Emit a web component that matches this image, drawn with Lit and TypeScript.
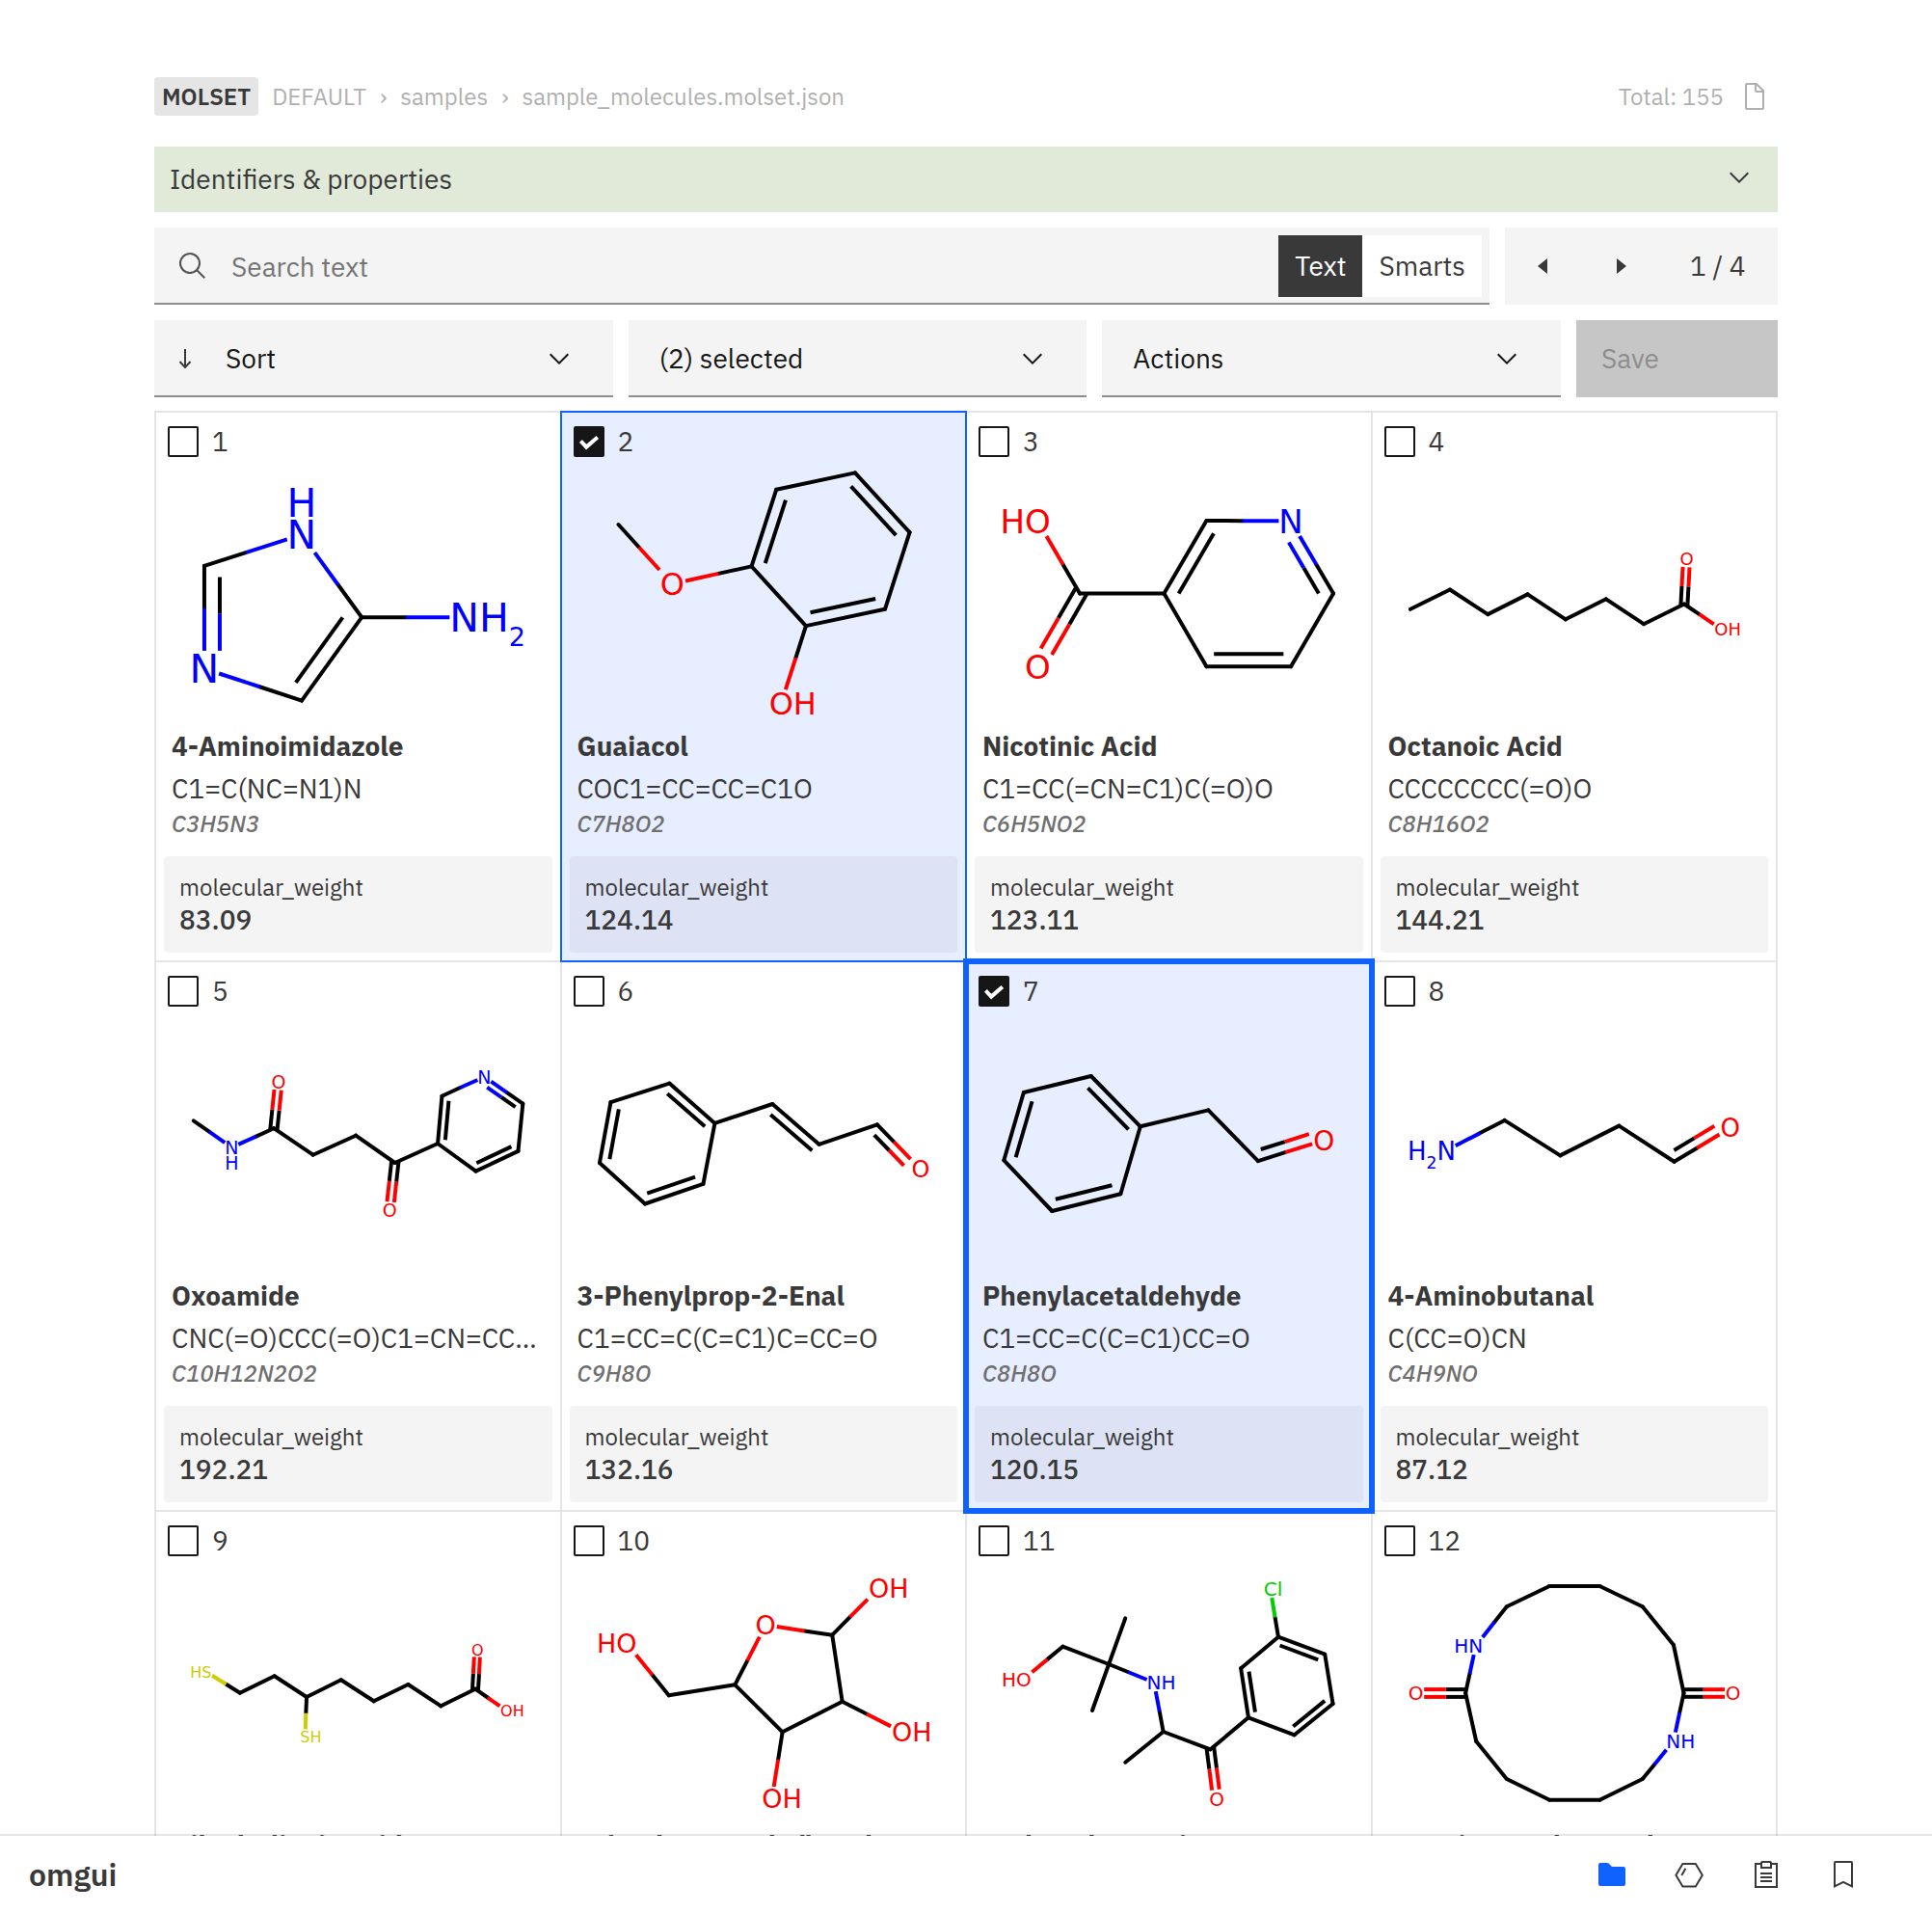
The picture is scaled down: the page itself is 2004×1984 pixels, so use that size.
import { LitElement, html, css, svg, nothing } from "lit";
import { customElement, property, state } from "lit/decorators.js";
import { classMap } from "lit/directives/class-map.js";

/* ---------- data ---------- */

type HSide = "left" | "right" | "up" | "down";

interface Atom {
  x: number;
  y: number;
  el: string;
  h: number;
  side: HSide;
}

/** Bond between atoms a and b. For a double bond, `toward` names the atom on
 *  whose side the second line runs; without it both lines are centred. */
interface Bond {
  a: number;
  b: number;
  double: boolean;
  toward?: number;
  trimA?: number;
  trimB?: number;
}

interface Structure {
  size: number;
  atoms: Atom[];
  bonds: Bond[];
}

interface Molecule {
  name: string;
  smiles: string;
  formula: string;
  weight: string;
  structure: Structure;
}

const C = (x: number, y: number): Atom => ({ x, y, el: "C", h: 0, side: "right" });
const X = (el: string, x: number, y: number, h = 0, side: HSide = "right"): Atom => ({ x, y, el, h, side });
const s = (a: number, b: number): Bond => ({ a, b, double: false });
const d = (a: number, b: number, toward?: number, trimA?: number, trimB?: number): Bond => ({
  a, b, double: true, toward, trimA, trimB,
});
const chain = (...ids: number[]): Bond[] => ids.slice(1).map((id, i) => s(ids[i], id));

const MOLECULES: Molecule[] = [
  {
    name: "4-Aminoimidazole", smiles: "C1=C(NC=N1)N", formula: "C3H5N3", weight: "83.09",
    structure: {
      size: 41,
      atoms: [C(51.7, 160.8), X("N", 152.7, 128.5, 1, "up"), C(215, 214.2), C(152.7, 300.6), X("N", 51.7, 267.5), X("N", 321.3, 214.2, 2)],
      bonds: [s(0, 1), s(1, 2), d(2, 3, 0, 0.11, 0.11), s(3, 4), d(4, 0, 1, 0.11, 0.11), s(2, 5)],
    },
  },
  {
    name: "Guaiacol", smiles: "COC1=CC=CC=C1O", formula: "C7H8O2", weight: "124.14",
    structure: {
      size: 32,
      atoms: [C(60.2, 118), X("O", 116, 179.5), C(198.3, 161.4), C(224, 81.7), C(305.7, 64.4), C(362.3, 126.1), C(336.7, 205.8), C(254.7, 223.1), X("O", 229, 303.6, 1)],
      bonds: [s(0, 1), s(1, 2), d(2, 3, 5), s(3, 4), d(4, 5, 7), s(5, 6), d(6, 7, 3), s(7, 2), s(7, 8)],
    },
  },
  {
    name: "Nicotinic Acid", smiles: "C1=CC(=CN=C1)C(=O)O", formula: "C6H5NO2", weight: "123.11",
    structure: {
      size: 34,
      atoms: [X("O", 75.2, 114.4, 1, "left"), C(118.8, 189.6), X("O", 75.2, 265.3), C(206.2, 189.6), C(250.2, 114), X("N", 337.8, 114.4), C(381.8, 189.6), C(337.8, 265.3), C(250.2, 265.3)],
      bonds: [s(0, 1), d(1, 2), s(1, 3), d(3, 4, 6), s(4, 5), d(5, 6, 8), s(6, 7), d(7, 8, 4), s(8, 3)],
    },
  },
  {
    name: "Octanoic Acid", smiles: "CCCCCCCC(=O)O", formula: "C8H16O2", weight: "144.21",
    structure: {
      size: 18,
      atoms: [C(40.7, 205.8), C(81.7, 185.5), C(121, 211.1), C(162.3, 190.4), C(201.7, 216.3), C(243.7, 195.3), C(282.7, 221.2), C(324.7, 200.5), X("O", 327.3, 153.9), X("O", 363.2, 226.5, 1)],
      bonds: [...chain(0, 1, 2, 3, 4, 5, 6, 7), d(7, 8), s(7, 9)],
    },
  },
  {
    name: "Oxoamide", smiles: "CNC(=O)CCC(=O)C1=CN=CC=C1", formula: "C10H12N2O2", weight: "192.21",
    structure: {
      size: 19,
      atoms: [C(40.5, 166.3), X("N", 80, 194.1, 1, "down"), C(123.8, 174.2), X("O", 128.8, 125.7), C(164.4, 201.7), C(208.8, 181.7), C(249.4, 210), X("O", 243.9, 259.2), C(293.8, 190), C(298.2, 140.7), X("N", 342.1, 120.8), C(382.1, 148.6), C(377.2, 197.9), C(333.3, 218.6)],
      bonds: [s(0, 1), s(1, 2), d(2, 3), ...chain(2, 4, 5, 6), d(6, 7), s(6, 8), d(8, 9, 11), s(9, 10), d(10, 11, 13), s(11, 12), d(12, 13, 9), s(13, 8)],
    },
  },
  {
    name: "3-Phenylprop-2-Enal", smiles: "C1=CC=C(C=C1)C=CC=O", formula: "C9H8O", weight: "132.16",
    structure: {
      size: 24,
      atoms: [C(160.2, 168.9), C(113.1, 127.6), C(52.2, 147.1), C(40.7, 210), C(87.8, 252.5), C(148.2, 231.8), C(220, 149), C(268.3, 190.8), C(328.6, 170.4), X("O", 373.6, 216.7)],
      bonds: [d(0, 1, 3), s(1, 2), d(2, 3, 5), s(3, 4), d(4, 5, 1), s(5, 0), s(0, 6), d(6, 7, 0, 0.088, 0.02), s(7, 8), d(8, 9, 7)],
    },
  },
  {
    name: "Phenylacetaldehyde", smiles: "C1=CC=C(C=C1)CC=O", formula: "C8H8O", weight: "120.15",
    structure: {
      size: 28,
      atoms: [C(181.6, 172.3), C(130.5, 120), C(60.6, 137), C(40.1, 207.3), C(90, 260), C(161.1, 242.3), C(252.1, 155.4), C(303.7, 208.1), X("O", 371.9, 186.6)],
      bonds: [d(0, 1, 3), s(1, 2), d(2, 3, 5), s(3, 4), d(4, 5, 1), s(5, 0), s(0, 6), s(6, 7), d(7, 8, 6)],
    },
  },
  {
    name: "4-Aminobutanal", smiles: "C(CC=O)CN", formula: "C4H9NO", weight: "87.12",
    structure: {
      size: 26,
      atoms: [X("N", 77.9, 197.2, 2, "left"), C(138.4, 165.9), C(196.1, 202.4), C(257.1, 171.6), C(314.3, 208.8), X("O", 372.5, 173.8)],
      bonds: [...chain(0, 1, 2, 3, 4), d(4, 5, 3)],
    },
  },
  {
    name: "Dihydrolipoic Acid", smiles: "C(CCC(=O)O)CC(CCS)S", formula: "C8H16O2S2", weight: "208.34",
    structure: {
      size: 16,
      atoms: [X("S", 54.2, 168.3, 1, "left"), C(88.7, 189.7), C(124.4, 172.3), C(157.8, 194), X("S", 156.2, 234.7, 1), C(193.5, 176.3), C(227.5, 198.3), C(263.1, 181), C(297.1, 203.3), C(332.8, 185.7), X("O", 335, 145.3), X("O", 365.1, 208, 1)],
      bonds: [...chain(0, 1, 2, 3, 5, 6, 7, 8, 9), s(3, 4), d(9, 10), s(9, 11)],
    },
  },
  {
    name: "5-(Hydroxymethyl)Oxolane-2,3,4-Triol", smiles: "C(C1C(C(C(O1)O)O)O)O", formula: "C5H10O5", weight: "150.13",
    structure: {
      size: 27,
      atoms: [X("O", 68.6, 138, 1, "left"), C(112.5, 192.3), C(181.1, 181.3), X("O", 212.9, 119.3), C(282, 129.7), X("O", 330.3, 81, 1), C(292.4, 198.7), X("O", 354.4, 230.3, 1), C(230.4, 230.3), X("O", 219.5, 299.3, 1)],
      bonds: [...chain(0, 1, 2, 3, 4, 6, 8, 2), s(4, 5), s(6, 7), s(8, 9)],
    },
  },
  {
    name: "Hydroxybupropion", smiles: "CC(C(=O)C1=CC(=CC=C1)Cl)NC(C)(C)CO", formula: "C13H18ClNO2", weight: "255.74",
    structure: {
      size: 20,
      atoms: [X("O", 60.6, 175.3, 1, "left"), C(101.1, 141.7), C(148.9, 160), C(166, 112.3), C(131.7, 208), X("N", 195.8, 179, 1), C(205.4, 230), C(166, 261.7), C(254.3, 248.3), X("O", 260.9, 299.3), C(293.7, 215.3), C(285.9, 164.3), C(324.7, 131.7), C(373, 149.7), C(381.3, 201), C(341.4, 233.3), X("Cl", 316.5, 82)],
      bonds: [...chain(0, 1, 2, 5, 6, 8, 10), s(2, 3), s(2, 4), s(6, 7), d(8, 9), d(10, 11, 13), s(11, 12), d(12, 13, 15), s(13, 14), d(14, 15, 11), s(15, 10), s(12, 16)],
    },
  },
  {
    name: "1,8-Diazacyclotetradecane-2,9-Dione", smiles: "C1CCC(=O)NCCCCCC(=O)NCC1", formula: "C12H22N2O2", weight: "226.32",
    structure: {
      size: 20,
      atoms: [C(185, 79), C(237.1, 79), C(281.5, 100.3), C(313.7, 140), C(324.3, 190), X("O", 375.3, 190), X("N", 313.6, 239.7, 1), C(281.5, 279), C(237.1, 300.7), C(185, 300.7), C(140.6, 279), C(109, 240), C(97.9, 190), X("O", 46.3, 190), X("N", 108.4, 141, 1, "left"), C(140.6, 100.3)],
      bonds: [...chain(0, 1, 2, 3, 4, 6, 7, 8, 9, 10, 11, 12, 14, 15, 0), d(4, 5), d(12, 13)],
    },
  },
];

/* ---------- icons ---------- */

const icon = (body: unknown, extra = "") =>
  html`<svg class="icon ${extra}" viewBox="0 0 32 32" aria-hidden="true">${body}</svg>`;

const ICONS = {
  document: svg`<path d="M25.7,9.3l-7-7C18.5,2.1,18.3,2,18,2H8C6.9,2,6,2.9,6,4v24c0,1.1,0.9,2,2,2h16c1.1,0,2-0.9,2-2V10C26,9.7,25.9,9.5,25.7,9.3z M18,4.4l5.6,5.6H18V4.4z M24,28H8V4h8v6c0,1.1,0.9,2,2,2h6V28z"/>`,
  chevron: svg`<path d="M16 22L6 12 7.4 10.6 16 19.2 24.6 10.6 26 12z"/>`,
  search: svg`<path d="M29 27.586l-7.552-7.552a11.018 11.018 0 1 0-1.414 1.414L27.586 29ZM4 13a9 9 0 1 1 9 9A9.01 9.01 0 0 1 4 13Z"/>`,
  caretLeft: svg`<path d="M20 24L10 16 20 8z"/>`,
  caretRight: svg`<path d="M12 8L22 16 12 24z"/>`,
  arrowDown: svg`<path d="M16 6V25M10.5 19L16 25L21.5 19" fill="none" stroke="currentColor" stroke-width="2"/>`,
  check: svg`<path d="M7.4 15.4L13.2 21.6L24.8 11.4" fill="none" stroke="#fff" stroke-width="4"/>`,
  folder: svg`<path d="M4 4H11.2a2 2 0 0 1 1.4.6L16 8H28a2 2 0 0 1 2 2V26a2 2 0 0 1-2 2H4a2 2 0 0 1-2-2V6A2 2 0 0 1 4 4Z"/>`,
  hexagon: svg`<path d="M2.4 16.8L9.4 5H22.8L29.8 16.8L22.8 28.4H9.4ZM8.3 17L12.4 9.8" fill="none" stroke="currentColor" stroke-width="2"/>`,
  clipboard: svg`<path d="M11 5H5V29H27V5H21M12 3H20a1 1 0 0 1 1 1V9H11V4a1 1 0 0 1 1-1ZM10 15H22M10 19H22M10 23H22" fill="none" stroke="currentColor" stroke-width="2"/>`,
  bookmark: svg`<path d="M24 4V26.75l-7.1-3.6-.9-.45-.9.45L8 26.75V4H24m0-2H8A2 2 0 0 0 6 4V30l10-5.05L26 30V4a2 2 0 0 0-2-2Z"/>`,
};

/* ---------- structure drawing ---------- */

const COLORS: Record<string, string> = { C: "#000", N: "#0000ff", O: "#ff0000", S: "#cccc00", Cl: "#00cc00" };
const ADVANCE: Record<string, number> = { N: 0.748, O: 0.787, S: 0.635, Cl: 0.698 };
const HALF_INK: Record<string, number> = { N: 0.28, O: 0.34, S: 0.26, Cl: 0.3 };
const H_ADVANCE = 0.752;
const SUB_SCALE = 0.66;
const CAP = 0.729;

type Point = [number, number];

@customElement("molecule-drawing")
export class MoleculeDrawing extends LitElement {
  @property({ attribute: false }) structure!: Structure;
  @property() label = "";

  static styles = css`
    :host { display: block; }
    .canvas { display: block; width: 100%; height: 270px; }
    .atom { font-family: "DejaVu Sans", sans-serif; }
    .bond { stroke-width: 4; fill: none; }
    .capped { stroke-linecap: round; }
  `;

  /** Fraction of the bond from→to that lies inside the label box of `from`. */
  private inside(from: Atom, to: Atom): number {
    if (from.el === "C") return 0;
    const size = this.structure.size;
    const hw = (HALF_INK[from.el] + 0.09) * size;
    const hh = (CAP / 2 + 0.09) * size;
    return Math.min(hw / Math.abs(to.x - from.x), hh / Math.abs(to.y - from.y));
  }

  private bond(bond: Bond) {
    const { atoms } = this.structure;
    const a = atoms[bond.a];
    const b = atoms[bond.b];
    const dx = b.x - a.x;
    const dy = b.y - a.y;
    const clearA = this.inside(a, b);
    const clearB = this.inside(b, a);

    const segment = (m: Point, n: Point, el: string, capped: boolean) => ({
      black: el === "C",
      node: svg`<path class=${classMap({ bond: true, capped: capped && el === "C" })} stroke=${COLORS[el]}
        d="M${m[0].toFixed(1)} ${m[1].toFixed(1)}L${n[0].toFixed(1)} ${n[1].toFixed(1)}"/>`,
    });

    /* A line parallel to the bond, `k` bond lengths aside, cut at both ends. */
    const line = (k: number, trimA: number, trimB: number, capped: boolean) => {
      const tA = clearA || trimA;
      const tB = 1 - (clearB || trimB);
      const at = (t: number): Point => [a.x - dy * k + dx * t, a.y + dx * k + dy * t];
      if (a.el === b.el) return [segment(at(tA), at(tB), a.el, capped)];
      const middle = at((tA + tB) / 2);
      return [segment(at(tA), middle, a.el, capped), segment(middle, at(tB), b.el, capped)];
    };

    if (!bond.double) return line(0, 0, 0, true);
    if (bond.toward === undefined) {
      return [...line(0.075, -0.04, -0.04, false), ...line(-0.075, -0.04, -0.04, false)];
    }
    const c = atoms[bond.toward];
    const k = 0.15 * Math.sign(-dy * (c.x - a.x) + dx * (c.y - a.y));
    return [...line(0, 0, 0, true), ...line(k, bond.trimA ?? 0.088, bond.trimB ?? 0.088, false)];
  }

  private atomLabel(atom: Atom) {
    if (atom.el === "C") return nothing;
    const size = this.structure.size;
    const fill = COLORS[atom.el];
    const left = atom.x - (ADVANCE[atom.el] * size) / 2;
    const base = atom.y + (CAP * size) / 2;
    const sub = atom.h > 1 ? svg`<tspan dy=${size * 0.36} font-size=${size * SUB_SCALE}>${atom.h}</tspan>` : nothing;
    if (atom.h === 0) return svg`<text class="atom" x=${left} y=${base} font-size=${size} fill=${fill}>${atom.el}</text>`;
    if (atom.side === "right") {
      return svg`<text class="atom" x=${left} y=${base} font-size=${size} fill=${fill}>${atom.el}H${sub}</text>`;
    }
    if (atom.side === "left") {
      const x = left - (H_ADVANCE + (atom.h > 1 ? 0.636 * SUB_SCALE : 0)) * size;
      return atom.h > 1
        ? svg`<text class="atom" x=${x} y=${base} font-size=${size} fill=${fill}>H${sub}<tspan dy=${-size * 0.36}>${atom.el}</tspan></text>`
        : svg`<text class="atom" x=${x} y=${base} font-size=${size} fill=${fill}>H${atom.el}</text>`;
    }
    const shift = (atom.side === "up" ? -0.82 : 0.82) * size;
    return svg`<text class="atom" x=${left} y=${base} font-size=${size} fill=${fill}>${atom.el}</text>
      <text class="atom" x=${left} y=${base + shift} font-size=${size} fill=${fill}>H</text>`;
  }

  render() {
    const segments = this.structure.bonds.flatMap((b) => this.bond(b));
    return html`<svg class="canvas" viewBox="2 52 418 270" role="img" aria-label=${this.label}>
      ${segments.filter((g) => g.black).map((g) => g.node)}
      ${segments.filter((g) => !g.black).map((g) => g.node)}
      ${this.structure.atoms.map((a) => this.atomLabel(a))}
    </svg>`;
  }
}

/* ---------- card ---------- */

@customElement("molecule-card")
export class MoleculeCard extends LitElement {
  @property({ attribute: false }) molecule!: Molecule;
  @property({ type: Number }) index = 0;
  @property({ type: Boolean, reflect: true }) selected = false;
  @property({ type: Boolean, reflect: true }) focal = false;

  static styles = css`
    :host {
      display: block;
      box-sizing: border-box;
      min-width: 0;
      margin: 0 -2px -2px 0;
      padding: 0 8px 8px;
      border: 2px solid #e5e5e5;
    }
    :host([selected]) { position: relative; z-index: 1; background: #e7eeff; border-color: #0f62fe; }
    :host([focal]) { z-index: 2; outline: 6px solid #0f62fe; outline-offset: -4px; }
    .head { display: flex; padding: 14px 4px 4px; }
    .pick { display: flex; align-items: center; gap: 14px; height: 32px; cursor: pointer; }
    .tick { display: grid; width: 32px; height: 32px; }
    .box {
      grid-area: 1 / 1;
      appearance: none;
      box-sizing: border-box;
      width: 32px;
      height: 32px;
      margin: 0;
      border: 2px solid #161616;
      border-radius: 2px;
    }
    .box:checked { background: #161616; }
    .icon { grid-area: 1 / 1; width: 32px; height: 32px; pointer-events: none; }
    .drawing { margin: 0 -8px; }
    .name, .smiles, .formula { margin: 0 8px; overflow: hidden; text-overflow: ellipsis; white-space: nowrap; }
    .name { margin-top: 8px; font-size: 28px; line-height: 36px; font-weight: 700; }
    .smiles { margin-top: 8px; font-size: 28px; line-height: 36px; }
    .formula { margin-top: 2px; font-size: 24px; line-height: 32px; font-style: italic; font-weight: 500; color: #6f6f6f; }
    .props { margin: 18px 0 0; padding: 16px; border-radius: 4px; background: rgba(0, 0, 0, 0.045); }
    .key { font-size: 24px; line-height: 32px; }
    .value { margin: 0; font-size: 28px; line-height: 36px; font-weight: 500; }
  `;

  private toggle() {
    this.dispatchEvent(new CustomEvent("pick", { bubbles: true, composed: true, detail: this.index }));
  }

  render() {
    const m = this.molecule;
    return html`
      <div class="head">
        <label class="pick">
          <span class="tick">
            <input class="box" type="checkbox" .checked=${this.selected} @change=${this.toggle} />
            ${this.selected ? icon(ICONS.check) : nothing}
          </span>
          ${this.index}
        </label>
      </div>
      <molecule-drawing class="drawing" .structure=${m.structure} .label=${m.name}></molecule-drawing>
      <h2 class="name">${m.name}</h2>
      <p class="smiles">${m.smiles}</p>
      <p class="formula">${m.formula}</p>
      <dl class="props">
        <dt class="key">molecular_weight</dt>
        <dd class="value">${m.weight}</dd>
      </dl>
    `;
  }
}

/* ---------- page ---------- */

@customElement("app-root")
export class AppRoot extends LitElement {
  @state() private picked = new Set([2, 7]);
  @state() private mode: "Text" | "Smarts" = "Text";

  static styles = css`
    :host {
      display: flex;
      flex-direction: column;
      height: 100vh;
      background: #fff;
      color: #393939;
      font: 400 28px/36px "IBM Plex Sans", "Open Sans", "Noto Sans", sans-serif;
    }
    button, input, select { font: inherit; color: inherit; border: 0; border-radius: 0; margin: 0; padding: 0; background: none; }
    button { cursor: pointer; }
    .icon { display: block; flex: none; width: 32px; height: 32px; fill: currentColor; }
    .scroll { flex: 1; min-height: 0; overflow-y: auto; scrollbar-width: none; }
    .page { display: flex; flex-direction: column; gap: 16px; max-width: 1684px; margin: 0 auto; padding: 80px 16px; }

    .top { display: flex; align-items: center; gap: 14px; margin-bottom: 16px; font-size: 24px; line-height: 40px; color: #b0b0b0; }
    .badge { padding: 0 8px; border-radius: 4px; background: #e5e5e5; color: #393939; font-weight: 600; }
    .crumbs { display: flex; gap: 14px; margin: 0; padding: 0; list-style: none; }
    .crumb { color: inherit; text-decoration: none; }
    .total { margin-left: auto; }
    .file { margin: 0 8px 0 2px; }

    .panel { display: flex; justify-content: space-between; align-items: center; padding: 16px 24px 16px 16px; background: #e1ead9; text-align: left; }
    .panel .icon { margin: -2px 0 2px; }

    .row { display: flex; gap: 16px; height: 80px; }
    .field { flex: 1; min-width: 0; background: #f4f4f4; box-shadow: inset 0 -2px #8d8d8d; }
    .search { display: flex; align-items: center; gap: 24px; padding: 0 8px 0 24px; }
    .query { flex: 1; min-width: 0; height: 64px; outline: none; }
    .query::placeholder { color: #757575; opacity: 1; }
    .search .icon { color: #525252; }
    .modes { display: flex; height: 64px; background: #fff; }
    .mode { padding: 0 17px; }
    .mode.on { background: #393939; color: #fff; }
    .pager { display: flex; align-items: center; background: #f4f4f4; }
    .turn { display: flex; justify-content: center; align-items: center; width: 80px; height: 80px; }
    .count { min-width: 59px; padding: 0 32px; }
    .pick { display: grid; grid-template-columns: auto 1fr auto; align-items: center; color: #161616; }
    .pick .lead { grid-area: 1 / 1; margin-left: 16px; color: #393939; }
    .pick .caret { grid-area: 1 / 3; margin-right: 40px; }
    .pick .icon { z-index: 1; pointer-events: none; }
    .select { grid-area: 1 / 1 / 2 / 4; width: 100%; height: 80px; padding: 0 80px 0 32px; appearance: none; }
    .indent { padding-left: 74px; }
    .save { box-sizing: border-box; width: 209px; padding: 0 26px; background: #c6c6c6; color: #8d8d8d; text-align: left; cursor: not-allowed; }

    .grid { display: grid; grid-template-columns: repeat(4, minmax(0, 1fr)); margin-top: -2px; padding: 0 2px 2px 0; }

    .dock {
      position: relative;
      z-index: 3;
      display: flex;
      align-items: center;
      height: 80px;
      margin-top: -2px;
      padding: 0 52px 0 30px;
      border-top: 2px solid rgba(0, 0, 0, 0.1);
      background: #fff;
      background-clip: padding-box;
    }
    .brand { margin-right: auto; font-size: 32px; line-height: 40px; font-weight: 600; color: inherit; text-decoration: none; }
    .tool { display: flex; justify-content: center; align-items: center; width: 80px; height: 80px; }
    .tool.current { color: #0f62fe; }
  `;

  private onPick(e: CustomEvent<number>) {
    const next = new Set(this.picked);
    if (!next.delete(e.detail)) next.add(e.detail);
    this.picked = next;
  }

  private dropdown(text: string, lead: unknown = nothing) {
    return html`<div class="field pick">
      ${lead === nothing ? nothing : icon(lead, "lead")}
      <select class=${classMap({ select: true, indent: lead !== nothing })} aria-label=${text}>
        <option>${text}</option>
      </select>
      ${icon(ICONS.chevron, "caret")}
    </div>`;
  }

  private tool(label: string, body: unknown, current = false) {
    return html`<button class=${classMap({ tool: true, current })} aria-label=${label}>${icon(body)}</button>`;
  }

  render() {
    return html`
      <div class="scroll">
        <main class="page">
          <header class="top">
            <span class="badge">MOLSET</span>
            <ol class="crumbs">
              <li><a class="crumb" href="#default">DEFAULT</a></li>
              <li aria-hidden="true">›</li>
              <li><a class="crumb" href="#samples">samples</a></li>
              <li aria-hidden="true">›</li>
              <li>sample_molecules.molset.json</li>
            </ol>
            <span class="total">Total: 155</span>
            <button class="file" aria-label="File">${icon(ICONS.document)}</button>
          </header>
          <button class="panel" aria-expanded="false">Identifiers &amp; properties ${icon(ICONS.chevron)}</button>
          <div class="row">
            <div class="field search">
              ${icon(ICONS.search)}
              <input class="query" type="text" placeholder="Search text" aria-label="Search text" />
              <div class="modes" role="group" aria-label="Search mode">
                ${(["Text", "Smarts"] as const).map(
                  (m) => html`<button class=${classMap({ mode: true, on: this.mode === m })}
                    aria-pressed=${this.mode === m} @click=${() => (this.mode = m)}>${m}</button>`
                )}
              </div>
            </div>
            <nav class="pager" aria-label="Pages">
              <button class="turn" aria-label="Previous page">${icon(ICONS.caretLeft)}</button>
              <button class="turn" aria-label="Next page">${icon(ICONS.caretRight)}</button>
              <span class="count">1 / 4</span>
            </nav>
          </div>
          <div class="row">
            ${this.dropdown("Sort", ICONS.arrowDown)}
            ${this.dropdown(`(${this.picked.size}) selected`)}
            ${this.dropdown("Actions")}
            <button class="save" disabled>Save</button>
          </div>
          <section class="grid" @pick=${this.onPick}>
            ${MOLECULES.map(
              (m, i) => html`<molecule-card .molecule=${m} .index=${i + 1}
                ?selected=${this.picked.has(i + 1)} ?focal=${i + 1 === 7}></molecule-card>`
            )}
          </section>
        </main>
      </div>
      <footer class="dock">
        <a class="brand" href="#home">omgui</a>
        ${this.tool("Files", ICONS.folder, true)}
        ${this.tool("Molecules", ICONS.hexagon)}
        ${this.tool("Results", ICONS.clipboard)}
        ${this.tool("My molecules", ICONS.bookmark)}
      </footer>
    `;
  }
}
